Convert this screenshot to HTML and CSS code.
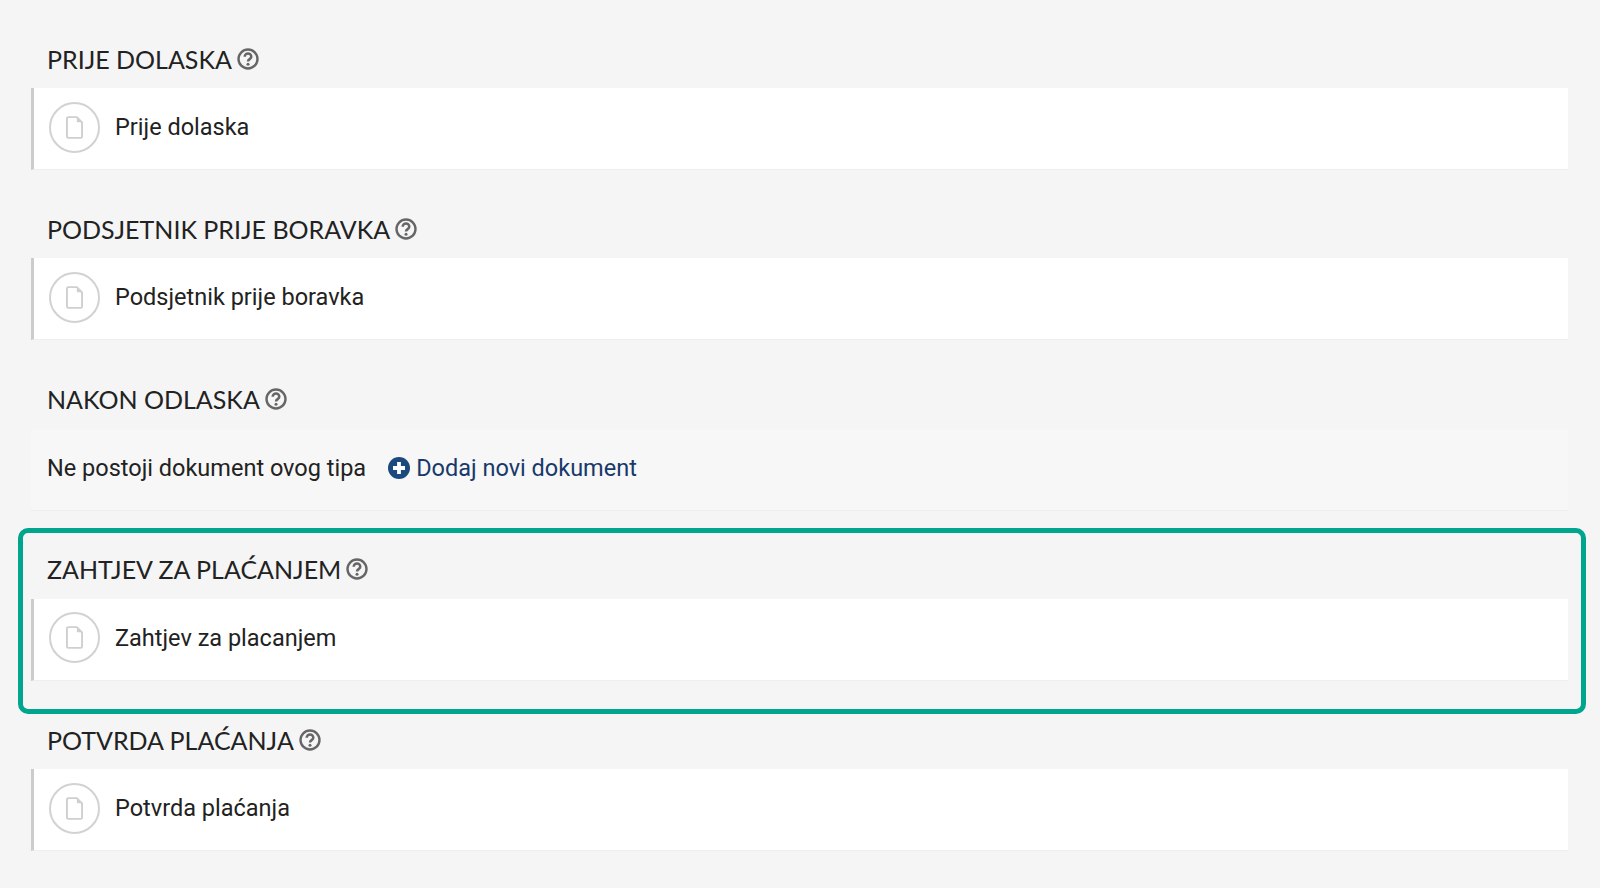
FILE: index.html
```html
<!DOCTYPE html>
<html lang="hr">
<head>
    <meta charset="UTF-8">
    <meta name="viewport" content="width=device-width, initial-scale=1.0">
    <title>Dokumenti</title>
    <link rel="stylesheet" href="styles.css">
</head>
<body>
    <svg class="defs" xmlns="http://www.w3.org/2000/svg">
        <symbol id="icon-help" viewBox="0 0 22 22">
            <circle cx="11" cy="11" r="9.500" fill="none" stroke="currentColor" stroke-width="2.400"/>
            <path d="M7.700 8.800a3.300 3.300 0 0 1 6.600 0c0 2.300-3.300 2.300-3.300 4.600" fill="none" stroke="currentColor" stroke-width="2.500"/>
            <circle cx="11" cy="16.300" r="1.500" fill="currentColor"/>
        </symbol>
        <symbol id="icon-doc" viewBox="0 0 18 24">
            <path d="M2.500 1h9l5.500 5.500v15a1.500 1.500 0 0 1-1.500 1.500h-13a1.500 1.500 0 0 1-1.500-1.500v-19a1.500 1.500 0 0 1 1.500-1.500z" fill="none" stroke="currentColor" stroke-width="2" stroke-linejoin="round"/>
            <path d="M11.500 1v5.500h5.500z" fill="currentColor"/>
        </symbol>
    </svg>

    <main class="page">
        <section class="group">
            <h2 class="group-title">PRIJE DOLASKA <svg class="help"><use href="#icon-help"/></svg></h2>
            <div class="doc-row">
                <span class="doc-icon"><svg><use href="#icon-doc"/></svg></span>
                <span>Prije dolaska</span>
            </div>
        </section>

        <section class="group">
            <h2 class="group-title">PODSJETNIK PRIJE BORAVKA <svg class="help"><use href="#icon-help"/></svg></h2>
            <div class="doc-row">
                <span class="doc-icon"><svg><use href="#icon-doc"/></svg></span>
                <span>Podsjetnik prije boravka</span>
            </div>
        </section>

        <section class="group">
            <h2 class="group-title">NAKON ODLASKA <svg class="help"><use href="#icon-help"/></svg></h2>
            <div class="empty-row">
                <span>Ne postoji dokument ovog tipa</span>
                <a class="add-link" href="#">
                    <svg class="add-icon" viewBox="0 0 22 22">
                        <circle cx="11" cy="11" r="11" fill="#1c4a7d"/>
                        <path d="M11 5v12M5 11h12" stroke="#fff" stroke-width="3.800"/>
                    </svg>
                    Dodaj novi dokument
                </a>
            </div>
        </section>

        <section class="group highlighted">
            <h2 class="group-title">ZAHTJEV ZA PLAĆANJEM <svg class="help"><use href="#icon-help"/></svg></h2>
            <div class="doc-row">
                <span class="doc-icon"><svg><use href="#icon-doc"/></svg></span>
                <span>Zahtjev za placanjem</span>
            </div>
        </section>

        <section class="group">
            <h2 class="group-title">POTVRDA PLAĆANJA <svg class="help"><use href="#icon-help"/></svg></h2>
            <div class="doc-row">
                <span class="doc-icon"><svg><use href="#icon-doc"/></svg></span>
                <span>Potvrda plaćanja</span>
            </div>
        </section>
    </main>
</body>
</html>
```

FILE: styles.css
```css
html, body {
    height: 100%;
    overflow: hidden;
}

body {
    margin: 0;
    background: #f5f5f5;
    color: #222;
    font-family: Roboto, "Liberation Sans", sans-serif;
    font-size: 23.500px;
}

.defs {
    display: none;
}

.page {
    padding: 41px 32px 0 31px;
}

.group {
    position: relative;
    height: 170.300px;
}

.group-title {
    display: flex;
    align-items: center;
    gap: 5px;
    height: 47px;
    margin: 0;
    padding: 0 0 12px 16px;
    box-sizing: border-box;
    font-family: Lato, "Liberation Sans", sans-serif;
    font-size: 25px;
    font-weight: 400;
    white-space: nowrap;
}

.help {
    width: 22px;
    height: 22px;
    color: #666;
}

.doc-row {
    display: flex;
    align-items: center;
    gap: 15px;
    height: 82px;
    padding: 0 0 3px 16px;
    background: #fff;
    border-left: 3px solid #ccc;
    border-bottom: 1px solid #eee;
    box-sizing: border-box;
}

.doc-icon {
    display: flex;
    align-items: center;
    justify-content: center;
    width: 51px;
    height: 51px;
    margin-left: -1px;
    border: 2px solid #d2d2d2;
    border-radius: 50%;
    box-sizing: border-box;
    color: #cfcfcf;
}

.doc-icon svg {
    width: 17px;
    height: 23px;
}

.empty-row {
    display: flex;
    align-items: center;
    gap: 22px;
    height: 82px;
    padding: 0 0 2px 16px;
    background: #f7f7f7;
    border-bottom: 1px solid #eee;
    box-sizing: border-box;
}

.add-link {
    display: flex;
    align-items: center;
    gap: 6px;
    color: #17396b;
    text-decoration: none;
}

.add-icon {
    width: 22px;
    height: 22px;
}

/* annotation frame drawn over the group */
.highlighted::after {
    content: "";
    position: absolute;
    top: -24px;
    left: -13px;
    right: -18px;
    height: 186px;
    border: 5px solid #00a58e;
    border-radius: 10px;
    box-sizing: border-box;
}
```
